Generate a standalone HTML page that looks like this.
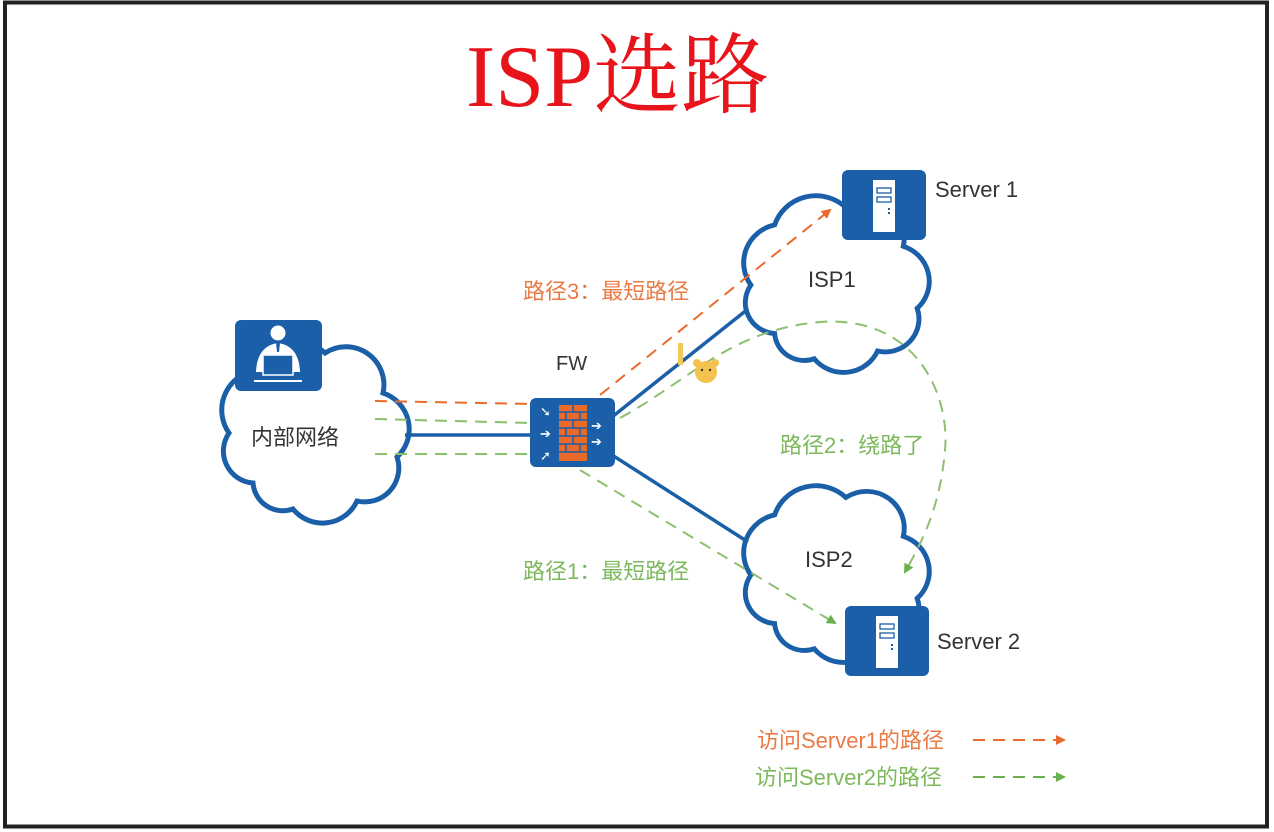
<!DOCTYPE html>
<html><head><meta charset="utf-8"><style>
html,body{margin:0;padding:0;background:#fff;}
svg{display:block}
text{font-family:"Liberation Sans","Noto Sans CJK SC",sans-serif}
</style></head><body>
<svg width="1274" height="832" viewBox="0 0 1274 832" xmlns="http://www.w3.org/2000/svg">
<defs>
<path id="cloud" d="M38,148 A32,32 0 0 1 14,98 A40,40 0 0 1 38,36 A44,44 0 0 1 110,18 A38,38 0 0 1 168,58 A38,38 0 0 1 182,122 A34,34 0 0 1 142,166 A38,38 0 0 1 78,174 A30,30 0 0 1 38,148 Z"/>
<marker id="ao" markerWidth="10" markerHeight="10" refX="8" refY="5" orient="auto" markerUnits="userSpaceOnUse"><path d="M0,0 L10,5 L0,10 Z" fill="#ea6a2c"/></marker>
<marker id="ag" markerWidth="10" markerHeight="10" refX="8" refY="5" orient="auto" markerUnits="userSpaceOnUse"><path d="M0,0 L10,5 L0,10 Z" fill="#6ab04c"/></marker>
</defs>
<rect x="5" y="2.5" width="1262" height="824" fill="#fff" stroke="#222" stroke-width="4"/>
<text x="466" y="106" font-size="88" fill="#e8141c" style="font-family:'Liberation Serif','Noto Serif CJK SC',serif">ISP选路</text>

<use href="#cloud" transform="translate(215,335)" fill="#fff" stroke="#1a5fa8" stroke-width="5"/>
<use href="#cloud" transform="translate(737,190) scale(0.99,0.97)" fill="#fff" stroke="#1a5fa8" stroke-width="5"/>
<use href="#cloud" transform="translate(737,480) scale(0.99,0.97)" fill="#fff" stroke="#1a5fa8" stroke-width="5"/>

<g stroke="#1a5fa8" stroke-width="3.5" fill="none">
<line x1="405" y1="435" x2="532" y2="435"/>
<line x1="612" y1="417" x2="748" y2="309"/>
<line x1="612" y1="455" x2="748" y2="542"/>
</g>

<g fill="none" stroke-width="2" stroke-dasharray="12,8">
<line x1="375" y1="401" x2="532" y2="404" stroke="#ea6a2c"/>
<line x1="600" y1="395" x2="830" y2="210" stroke="#ea6a2c" marker-end="url(#ao)"/>
<line x1="375" y1="419" x2="532" y2="423" stroke="#8cc070"/>
<line x1="375" y1="454" x2="532" y2="454" stroke="#8cc070"/>
<line x1="580" y1="470" x2="835" y2="623" stroke="#8cc070" marker-end="url(#ag)"/>
<path d="M620,418 C690,380 730,330 820,322 C920,315 950,400 945,450 C940,510 920,545 905,572" stroke="#8cc070" marker-end="url(#ag)"/>
</g>

<rect x="235" y="320" width="87" height="71" rx="6" fill="#1a5fa8"/>
<circle cx="278" cy="333" r="7.5" fill="#fff"/>
<path d="M256,372 Q257,346 278,343 Q299,346 300,372 Z" fill="#fff"/>
<path d="M276,343 L280,343 L279,352 L277,352 Z" fill="#1a5fa8"/>
<rect x="263" y="355" width="30" height="20" fill="#1a5fa8" stroke="#fff" stroke-width="1.5"/>
<line x1="254" y1="381" x2="302" y2="381" stroke="#fff" stroke-width="2"/>

<rect x="530" y="398" width="85" height="69" rx="6" fill="#1a5fa8"/>
<rect x="559" y="405" width="28" height="56" fill="#ea6a2c"/>
<g stroke="#1a5fa8" stroke-width="1.5">
<line x1="559" y1="412" x2="587" y2="412"/><line x1="559" y1="420" x2="587" y2="420"/><line x1="559" y1="428" x2="587" y2="428"/><line x1="559" y1="436" x2="587" y2="436"/><line x1="559" y1="444" x2="587" y2="444"/><line x1="559" y1="452" x2="587" y2="452"/>
<line x1="573" y1="405" x2="573" y2="412"/><line x1="566" y1="412" x2="566" y2="420"/><line x1="580" y1="412" x2="580" y2="420"/><line x1="573" y1="420" x2="573" y2="428"/><line x1="566" y1="428" x2="566" y2="436"/><line x1="580" y1="428" x2="580" y2="436"/><line x1="573" y1="436" x2="573" y2="444"/><line x1="566" y1="444" x2="566" y2="452"/><line x1="580" y1="444" x2="580" y2="452"/>
</g>
<g fill="#fff" font-size="13">
<text x="540" y="416">➘</text><text x="540" y="438">➔</text><text x="540" y="460">➚</text>
<text x="591" y="430">➔</text><text x="591" y="446">➔</text>
</g>
<text x="556" y="370" font-size="20" fill="#333">FW</text>

<rect x="842" y="170" width="84" height="70" rx="6" fill="#1a5fa8"/>
<rect x="873" y="180" width="22" height="52" fill="#fff"/>
<rect x="877" y="188" width="14" height="5" fill="none" stroke="#1a5fa8" stroke-width="1.3"/>
<rect x="877" y="197" width="14" height="5" fill="none" stroke="#1a5fa8" stroke-width="1.3"/>
<rect x="888" y="208" width="2" height="2" fill="#1a5fa8"/><rect x="888" y="212" width="2" height="2" fill="#1a5fa8"/>
<rect x="845" y="606" width="84" height="70" rx="6" fill="#1a5fa8"/>
<rect x="876" y="616" width="22" height="52" fill="#fff"/>
<rect x="880" y="624" width="14" height="5" fill="none" stroke="#1a5fa8" stroke-width="1.3"/>
<rect x="880" y="633" width="14" height="5" fill="none" stroke="#1a5fa8" stroke-width="1.3"/>
<rect x="891" y="644" width="2" height="2" fill="#1a5fa8"/><rect x="891" y="648" width="2" height="2" fill="#1a5fa8"/>

<rect x="678" y="343" width="5" height="22" fill="#f0c95a"/>
<circle cx="706" cy="372" r="11" fill="#f3c24f"/>
<circle cx="697" cy="363" r="4" fill="#f3c24f"/><circle cx="715" cy="363" r="4" fill="#f3c24f"/>
<circle cx="702" cy="370" r="1.2" fill="#333"/><circle cx="710" cy="370" r="1.2" fill="#333"/>

<g font-size="22" fill="#333">
<text x="251" y="445">内部网络</text>
<text x="808" y="287">ISP1</text>
<text x="805" y="567">ISP2</text>
<text x="935" y="197">Server 1</text>
<text x="937" y="649">Server 2</text>
</g>
<text x="523" y="299" font-size="22" fill="#ea7a44">路径3：最短路径</text>
<text x="780" y="453" font-size="22" fill="#7cb85c">路径2：绕路了</text>
<text x="523" y="579" font-size="22" fill="#7cb85c">路径1：最短路径</text>
<text x="757" y="748" font-size="22" fill="#ea7a44">访问Server1的路径</text>
<text x="755" y="785" font-size="22" fill="#7cb85c">访问Server2的路径</text>
<line x1="973" y1="740" x2="1064" y2="740" stroke="#ea6a2c" stroke-width="2" stroke-dasharray="12,8" marker-end="url(#ao)"/>
<line x1="973" y1="777" x2="1064" y2="777" stroke="#6ab04c" stroke-width="2" stroke-dasharray="12,8" marker-end="url(#ag)"/>
</svg>
</body></html>
